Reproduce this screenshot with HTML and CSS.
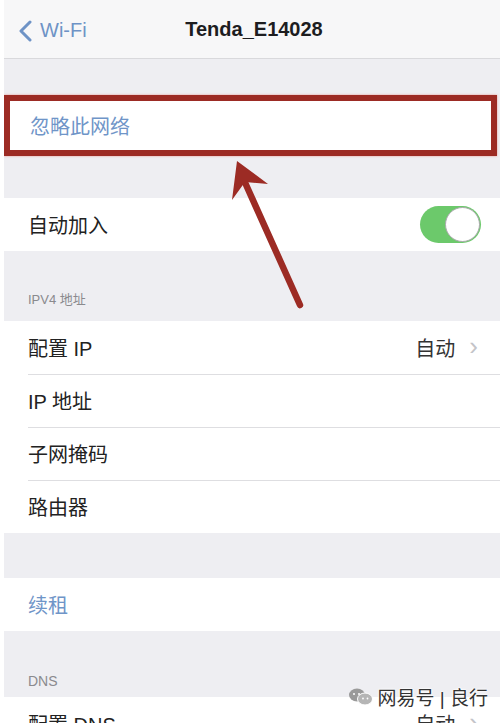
FILE: index.html
```html
<!DOCTYPE html>
<html lang="zh-CN">

<head>
    <meta charset="UTF-8">
    <meta name="viewport" content="width=device-width, initial-scale=1.0">
    <title>Tenda_E14028</title>
    <link rel="stylesheet" href="styles.css">
</head>

<body>

    <div class="screen">
        <!-- Navigation bar -->
        <div class="nav-bar">
            <a class="back" href="#">
                <svg class="back-icon" width="16" height="22" viewBox="0 0 16 22">
                    <path d="M12 2 L3 11 L12 20" fill="none" stroke="#6e93c6" stroke-width="3" stroke-linecap="round" stroke-linejoin="round"/>
                </svg>
                Wi-Fi
            </a>
            <h1 class="title">Tenda_E14028</h1>
        </div>

        <div class="gap gap-top"></div>

        <!-- Forget this network -->
        <div class="row row-marked">
            <span class="link">忽略此网络</span>
        </div>

        <div class="gap gap-mid"></div>

        <div class="group">
            <div class="row">
                <span class="label">自动加入</span>
                <span class="switch on"><span class="knob"></span></span>
            </div>
        </div>

        <div class="section-head section-ipv4">IPV4 地址</div>

        <div class="group">
            <div class="row">
                <span class="label">配置 IP</span>
                <span class="detail">自动<span class="chevron">&#x203A;</span></span>
            </div>
            <div class="row">
                <span class="label">IP 地址</span>
            </div>
            <div class="row">
                <span class="label">子网掩码</span>
            </div>
            <div class="row">
                <span class="label">路由器</span>
            </div>
        </div>

        <div class="gap gap-lease"></div>

        <div class="group">
            <div class="row">
                <span class="link">续租</span>
            </div>
        </div>

        <div class="section-head section-dns">DNS</div>

        <div class="group">
            <div class="row">
                <span class="label">配置 DNS</span>
                <span class="detail">自动<span class="chevron">&#x203A;</span></span>
            </div>
        </div>

        <!-- pointer arrow drawn over the list -->
        <svg class="pointer" width="500" height="723" viewBox="0 0 500 723">
            <line x1="300" y1="305" x2="243" y2="178" stroke="#9c2b24" stroke-width="6.5" stroke-linecap="round"/>
            <polygon points="237,161 232,200 245,182 268,184" fill="#9c2b24"/>
        </svg>

        <!-- watermark -->
        <div class="watermark">
            <svg width="26" height="20" viewBox="0 0 26 20">
                <ellipse cx="9" cy="8" rx="8" ry="6.5" fill="#9a9a9a"/>
                <ellipse cx="17" cy="12" rx="7.5" ry="6" fill="#b5b5b5" stroke="#fff" stroke-width="1"/>
                <circle cx="6" cy="7" r="1" fill="#fff"/>
                <circle cx="11" cy="7" r="1" fill="#fff"/>
                <circle cx="15" cy="11.5" r="0.9" fill="#fff"/>
                <circle cx="19.5" cy="11.5" r="0.9" fill="#fff"/>
            </svg>
            <span>网易号 | 良行</span>
        </div>
    </div>

</body>

</html>
```

FILE: styles.css
```css
html,
body {
    margin: 0;
    padding: 0;
    background: #fff;
}

body {
    font-family: "Liberation Sans", "Noto Sans CJK SC", sans-serif;
    color: #222;
}

.screen {
    position: relative;
    width: 496px;
    height: 723px;
    margin-left: 4px;
    overflow: hidden;
    background-color: #eeeef2;
}

.nav-bar {
    position: relative;
    height: 58px;
    background-color: #f7f7f8;
    border-bottom: 1px solid #d9d9dc;
    display: flex;
    align-items: center;
    justify-content: center;
}

.back {
    position: absolute;
    left: 14px;
    top: 19px;
    display: flex;
    align-items: center;
    gap: 6px;
    color: #6e93c6;
    font-size: 20px;
    text-decoration: none;
}

.title {
    margin: 0 0 0 4px;
    font-size: 20px;
    font-weight: bold;
    color: #1d1d1f;
}

.gap-top {
    height: 36px;
}

.gap-mid {
    height: 42px;
}

.gap-lease {
    height: 45px;
}

.group {
    background: #fff;
}

.row {
    height: 53px;
    padding: 0 22px 0 24px;
    display: flex;
    align-items: center;
    justify-content: space-between;
    background: #fff;
    font-size: 20px;
    position: relative;
}

.group .row + .row::before {
    content: "";
    position: absolute;
    left: 24px;
    right: 0;
    top: 0;
    border-top: 1px solid #dedee1;
}

.row-marked {
    height: 49px;
    border: 6px solid #9c2b24;
    margin-right: 3px;
    padding-left: 20px;
    box-shadow: 0 0 2px rgba(230, 90, 80, 0.6);
}

.label {
    color: #222;
}

.link {
    color: #6f95c8;
}

.detail {
    color: #333;
    display: flex;
    align-items: center;
}

.chevron {
    color: #c4c4c8;
    font-size: 26px;
    margin-left: 14px;
    margin-top: -3px;
}

.switch {
    width: 61px;
    height: 37px;
    border-radius: 19px;
    background: #6cc96b;
    position: relative;
    margin-right: -3px;
}

.switch .knob {
    position: absolute;
    right: 1px;
    top: 1px;
    width: 33px;
    height: 33px;
    border-radius: 50%;
    background: #fff;
    border: 1px solid #a9a9ab;
}

.section-head {
    font-size: 13px;
    color: #8a8a8e;
    padding-left: 24px;
    display: flex;
    align-items: flex-end;
}

.section-ipv4 {
    height: 70px;
    padding-bottom: 13px;
    box-sizing: border-box;
}

.section-dns {
    height: 66px;
    padding-bottom: 8px;
    box-sizing: border-box;
    font-size: 14px;
}

.pointer {
    position: absolute;
    left: -4px;
    top: 0;
    pointer-events: none;
}

.watermark {
    position: absolute;
    right: 12px;
    top: 683px;
    display: flex;
    align-items: center;
    gap: 4px;
    font-size: 19px;
    color: #333;
    text-shadow: 0 0 2px #fff, 0 0 2px #fff, 0 0 3px #fff;
}
```
